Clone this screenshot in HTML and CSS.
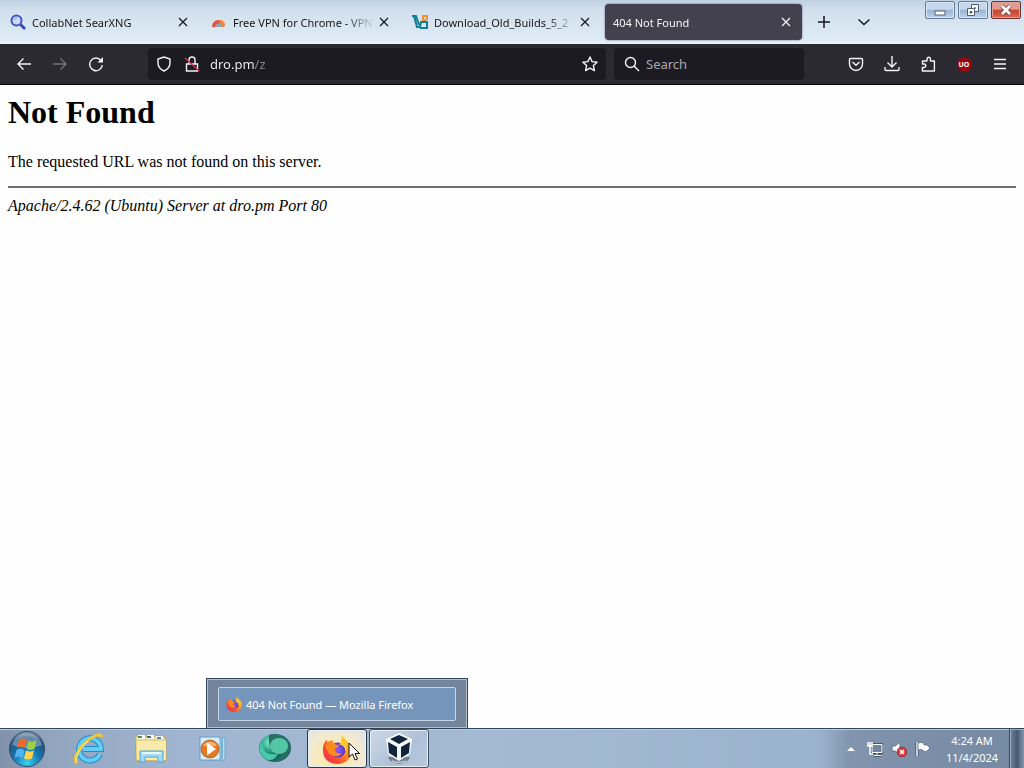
FILE: index.html
```html
<!DOCTYPE html>
<html lang="en">
<head>
<meta charset="utf-8">
<title>404 Not Found</title>
<link rel="stylesheet" href="styles.css">
</head>
<body>
<svg class="defs" aria-hidden="true">
  <defs>
    <linearGradient id="foxBody" x1="1" y1="0" x2="0" y2="1"><stop offset="0" stop-color="#fff04a"/><stop offset=".35" stop-color="#ffa51f"/><stop offset=".7" stop-color="#fb4a32"/><stop offset="1" stop-color="#e6236a"/></linearGradient>
    <radialGradient id="foxCore"><stop offset="0" stop-color="#9059ff"/><stop offset="1" stop-color="#5737c8"/></radialGradient>
    <symbol id="firefox" viewBox="0 0 32 32">
      <path fill="url(#foxBody)" d="M21 0c1 4 5 6 7 9 1 1 1 1 1 0 6 11 1 22-12 23C7 32 1 26 1 17c0-6 2-9 4-11l1 3c2-2 4-2 6-2l-1 5 7 1c3 0 3-9 3-13z"/>
      <circle cx="17" cy="17" r="8" fill="url(#foxCore)"/>
      <path fill="#ff8b20" d="M4 12c3-4 7-4 10-1l4 1c0 2-3 3-4 4 0 3 2 5 7 5-6 6-16 2-17-9z"/>
      <path fill="#ffca28" d="M21 5c5 3 7 9 4 14 0-5-3-7-7-8 2-1 3-3 3-6z"/>
    </symbol>
    <symbol id="cross" viewBox="0 0 10 10"><path d="M1 1l8 8M9 1L1 9" fill="none" stroke="currentColor" stroke-width="1.200"/></symbol>
  </defs>
</svg>

<header class="tabbar">
  <div class="tabs">
    <div class="tab">
      <svg class="favicon" viewBox="0 0 16 16"><circle cx="6.500" cy="6.500" r="5" fill="#cfdcff" stroke="#3d55c9" stroke-width="2"/><path d="M10.500 10.500L15 15" stroke="#3346b5" stroke-width="2.800"/><path d="M4 6a3 3 0 0 1 3-2" fill="none" stroke="#7b90ed"/></svg>
      <span class="tab-title">CollabNet SearXNG</span>
      <button class="tab-close" aria-label="Close tab"><svg><use href="#cross"/></svg></button>
    </div>
    <div class="tab">
      <svg class="favicon" viewBox="0 0 16 16"><path d="M1 13a6.500 6.500 0 0 1 13-1l-3 1a4 4 0 0 0-7 0z" fill="#e44d3c"/><path d="M9 6c3 0 5 2 5 6l-3 1c0-2-1-3-3-4z" fill="#f08a3c"/><path d="M4 13a3.500 3.500 0 0 1 7 0z" fill="#93a1b5"/></svg>
      <span class="tab-title">Free VPN for Chrome - VPN</span>
      <button class="tab-close" aria-label="Close tab"><svg><use href="#cross"/></svg></button>
    </div>
    <div class="tab">
      <svg class="favicon" viewBox="0 0 16 16"><path d="M0 2h4l3 9M2 2l3 11h3l1-5h6v6H8" fill="none" stroke="#167d92" stroke-width="2"/><path d="M15 6V2h-4v4h3" fill="none" stroke="#f29132" stroke-width="2"/></svg>
      <span class="tab-title">Download_Old_Builds_5_2</span>
      <button class="tab-close" aria-label="Close tab"><svg><use href="#cross"/></svg></button>
    </div>
    <div class="tab tab-active">
      <span class="tab-title">404 Not Found</span>
      <button class="tab-close" aria-label="Close tab"><svg><use href="#cross"/></svg></button>
    </div>
  </div>
  <button class="tab-tool" aria-label="New tab"><svg viewBox="0 0 14 14"><path d="M7 1v12M1 7h12"/></svg></button>
  <button class="tab-tool" aria-label="List all tabs"><svg viewBox="0 0 14 14"><path d="M1.500 4.500L7 9.500l5.500-5"/></svg></button>
  <div class="window-controls">
    <button class="win" aria-label="Minimize"><svg viewBox="0 0 16 14"><rect x="3" y="8" width="10" height="4" fill="#fff" stroke="#535d70"/></svg></button>
    <button class="win" aria-label="Restore"><svg viewBox="0 0 16 14"><path d="M6.500 1.500h7v7h-7z" fill="#f5f9ff" stroke="#535d70"/><path d="M9 4h2v2H9z" fill="#8597b2"/><path d="M2.500 5.500h7v7h-7z" fill="#fff" stroke="#535d70"/><path d="M5 8.500h2v1.500H5z" fill="#8597b2" stroke="#535d70"/></svg></button>
    <button class="win win-close" aria-label="Close"><svg viewBox="0 0 16 14"><path d="M4 3l8 8M12 3l-8 8" stroke="#71433f" stroke-width="4.500"/><path d="M4 3l8 8M12 3l-8 8" stroke="#fff" stroke-width="2.800"/></svg></button>
  </div>
</header>

<nav class="toolbar">
  <div class="nav-buttons">
    <button class="tool" aria-label="Back"><svg viewBox="0 0 16 16"><path d="M15 8H2M7.500 2.500L2 8l5.500 5.500"/></svg></button>
    <button class="tool" aria-label="Forward" disabled><svg viewBox="0 0 16 16"><path d="M1 8h13M8.500 2.500L14 8l-5.500 5.500"/></svg></button>
    <button class="tool" aria-label="Reload"><svg viewBox="0 0 16 16"><path d="M13 4.500A6.300 6.300 0 1 0 14.300 9"/><path class="solid" d="M15 1v5.500H9.500z"/></svg></button>
  </div>
  <div class="field url-field">
    <button class="tool" aria-label="Tracking protection"><svg viewBox="0 0 16 16"><path d="M8 1l6 2v4c0 4-2.500 6.500-6 8-3.500-1.500-6-4-6-8V3z"/></svg></button>
    <button class="tool" aria-label="Connection not secure"><svg viewBox="0 0 16 16"><path d="M2.500 8h11v7h-11zM5 8V4a3 3 0 0 1 6 0v4"/><path class="slash" d="M1 2l14 13"/></svg></button>
    <input class="url-input" type="text" aria-label="Address" value="dro.pm/z">
    <button class="tool" aria-label="Bookmark this page"><svg viewBox="0 0 16 16"><path stroke-linejoin="round" d="M8 1l2.100 4.600 5 .6-3.700 3.400 1 5L8 12.100l-4.400 2.500 1-5L.9 6.200l5-.6z"/></svg></button>
  </div>
  <div class="field search-field">
    <label class="search-label" for="search"><svg viewBox="0 0 16 16"><circle cx="6.500" cy="6.500" r="5"/><path d="M10 10l5 5"/></svg></label>
    <input id="search" type="text" placeholder="Search" aria-label="Search">
  </div>
  <div class="actions">
    <button class="tool" aria-label="Save to Pocket"><svg viewBox="0 0 16 16"><path d="M2.500 2.500h11q1 0 1 1V8A6.500 6.500 0 0 1 1.500 8V3.500q0-1 1-1zM4.500 6L8 9.300 11.500 6"/></svg></button>
    <button class="tool" aria-label="Downloads"><svg viewBox="0 0 16 16"><path d="M8 0v11M3.500 6.500L8 11l4.500-4.500M1 11v2.500q0 1 1 1h12q1 0 1-1V11"/></svg></button>
    <button class="tool" aria-label="Extensions"><svg viewBox="0 0 16 16"><path stroke-linejoin="round" d="M2.500 8V5H7V3a1.700 1.700 0 0 1 3.400 0v2h4v10h-12v-3.500h2a1.800 1.800 0 0 0 0-3.500z"/></svg></button>
    <button class="tool" aria-label="uBlock Origin"><span class="shield">UO</span></button>
    <button class="tool" aria-label="Menu"><svg viewBox="0 0 16 16"><path d="M2 3.500h12M2 8h12M2 12.500h12"/></svg></button>
  </div>
</nav>

<main class="page">
  <h1>Not Found</h1>
  <p>The requested URL was not found on this server.</p>
  <hr>
  <address>Apache/2.4.62 (Ubuntu) Server at dro.pm Port 80</address>
</main>

<footer class="taskbar">
  <button class="start" aria-label="Start">
    <svg viewBox="0 0 38 38">
      <defs><radialGradient id="orb" cx=".5" cy=".9" r=".9"><stop offset="0" stop-color="#35d3f5"/><stop offset=".45" stop-color="#1673ad"/><stop offset=".8" stop-color="#24547c"/><stop offset="1" stop-color="#8ca8be"/></radialGradient></defs>
      <circle cx="19" cy="19" r="17.500" fill="url(#orb)" stroke="#344b63"/>
      <path d="M4 15a15.500 15.500 0 0 1 30 0Q19 21 4 15z" fill="#fff" opacity=".3"/>
      <path d="M11 10q4-3 8 0l-2 8q-4-3-8 0z" fill="#f1672c"/><path d="M20.500 11q4 2 8-1l-2 9q-4 2-8 0z" fill="#9bcf45"/><path d="M8.500 20q4-3 8 0l-2 8q-4-3-8 0z" fill="#51b4ee"/><path d="M18 20.500q4 2 8 0l-2 8q-4 2-8 0z" fill="#ffd34c"/>
    </svg>
  </button>
  <div class="apps">
    <button class="app" aria-label="Internet Explorer"><svg viewBox="0 0 32 32"><path d="M27 21A11 11 0 1 1 28 16H10" fill="none" stroke="#2689ca" stroke-width="6"/><path d="M27 21A11 11 0 1 1 28 16H10" fill="none" stroke="#62cdf5" stroke-width="4"/><path d="M4 30C-1 28 5 16 13 9S28 0 29 4" fill="none" stroke="#eec73b" stroke-width="3"/><path d="M4 29C1 26 7 15 15 8" fill="none" stroke="#fff08c"/></svg></button>
    <button class="app" aria-label="Windows Explorer"><svg viewBox="0 0 32 32"><path d="M0 3h29l2 3v22H1z" fill="#e9d58a" stroke="#b8a15c"/><path d="M2 8h29v19H2z" fill="#f8eaa8"/><path d="M3 2h7v4H3zM12 2h7v4h-7zM21 3h7v3h-7z" fill="#fff"/><path d="M3 3h4v2H3z" fill="#4d983d"/><path d="M12 3h4v2h-4z" fill="#49677c"/><path d="M22 4h4v2h-4z" fill="#408cca"/><path d="M5 29V18h23v11h-5v-5H10v5z" fill="#a5daf2" stroke="#53a6d1"/><path d="M7 20h19" stroke="#e4f8ff" stroke-width="2"/></svg></button>
    <button class="app" aria-label="Windows Media Player"><svg viewBox="0 0 32 32"><path d="M8 5h20v22H8z" fill="#b8dff5" stroke="#6fa6cc"/><path d="M3 4h20v23H3z" fill="#d8effa" stroke="#5d9fca"/><path d="M25 6v20" stroke="#3986bf"/><circle cx="13" cy="16" r="9" fill="#e57923" stroke="#b96531"/><path d="M6 13a8 8 0 0 1 14 0z" fill="#f6b375"/><path d="M10 9.500L19 16l-9 6.500z" fill="#fff"/></svg></button>
    <button class="app" aria-label="Web browser">
      <svg viewBox="0 0 32 32"><defs><radialGradient id="sphere" cx=".35" cy=".3"><stop offset="0" stop-color="#8cf0d0"/><stop offset=".6" stop-color="#2ba187"/><stop offset="1" stop-color="#19695f"/></radialGradient></defs><ellipse cx="16" cy="15" rx="16" ry="14" fill="url(#sphere)"/><path d="M10 2c11-4 22 5 21 14-1 7-9 13-17 12 6-2 8-4 9-7-9 2-14-4-13-19z" fill="#286e63"/><ellipse cx="20" cy="13" rx="9" ry="8" fill="#52c6a5"/><path d="M3 9c1 12 7 13 16 12-3 6-9 8-14 4C0 20-1 14 3 9z" fill="#45c9a8"/></svg>
    </button>
    <div class="app-slot">
      <button class="app app-hot" aria-label="Mozilla Firefox"><svg><use href="#firefox"/></svg></button>
      <div class="preview">
        <button class="preview-item"><svg><use href="#firefox"/></svg><span>404 Not Found — Mozilla Firefox</span></button>
      </div>
      <svg class="cursor" viewBox="0 0 12 19"><path d="M1 1v14l3.500-3 2.500 6 2.500-1L7 11.500h4.500z" fill="#fff" stroke="#111"/></svg>
    </div>
    <button class="app app-open" aria-label="VirtualBox"><svg viewBox="0 0 32 32"><path d="M5 24q2 6 11 7 9-1 11-7z" fill="#71808e"/><path d="M9 28q7 3 14 0" fill="none" stroke="#b9c6d1" stroke-width="1.500"/><path d="M16 0l13 6-2 15-11 7-11-7L3 6z" fill="#f6f9fc"/><path d="M16 2l9 4-9 5-9-5zM5 9l9 5v11l-8-5zM27 9l-9 5v11l8-5z" fill="#10243c"/></svg></button>
  </div>
  <div class="tray">
    <button class="tray-icon" aria-label="Show hidden icons"><svg viewBox="0 0 16 16"><path d="M4 10l4-4 4 4z" fill="#fff"/></svg></button>
    <button class="tray-icon" aria-label="Network"><svg viewBox="0 0 16 16"><path d="M5 3.500h10v8H5zM10 12v3M7 14.500h7" fill="#687e98" stroke="#354357" stroke-width="2.500"/><path d="M5 3.500h10v8H5zM10 12v2M7 14.500h7" fill="#71879f" stroke="#fff"/><path d="M1 1v4h4V1M3 1v12h3" fill="none" stroke="#fff" stroke-width="1.500"/></svg></button>
    <button class="tray-icon" aria-label="Volume muted"><svg viewBox="0 0 16 16"><path d="M1 5h3l5-4v13l-5-4H1z" fill="#f4f7fa" stroke="#637386"/><circle cx="11" cy="11" r="4.800" fill="#d93837" stroke="#9d3038"/><path d="M9 9l4 4M13 9l-4 4" stroke="#fff" stroke-width="1.700"/></svg></button>
    <button class="tray-icon" aria-label="Action Center"><svg viewBox="0 0 16 16"><path d="M2 1v14" stroke="#34465b" stroke-width="3"/><path d="M2 1v14" stroke="#fff" stroke-width="1.500"/><path d="M3 2q3-1 6 0v2h3l3 3-3 3q-2 1-4 0V9q-3-1-5 0z" fill="#fff" stroke="#526278" stroke-width=".7"/></svg></button>
    <button class="clock"><span>4:24 AM</span><span>11/4/2024</span></button>
    <button class="show-desktop" aria-label="Show desktop"></button>
  </div>
</footer>
</body>
</html>
```

FILE: styles.css
```css
* { box-sizing: border-box; }

body {
  display: flex;
  flex-direction: column;
  min-height: 100vh;
  margin: 0;
  background: #fefefe;
  font-family: "Noto Sans", "Open Sans", sans-serif;
  font-size: 12px;
}

button, input {
  margin: 0;
  padding: 0;
  border: 0;
  background: none;
  color: inherit;
  font: inherit;
}

.defs { position: absolute; width: 0; height: 0; }

.tabbar {
  display: flex;
  align-items: center;
  height: 44px;
  background: linear-gradient(#c0d2e5, #d3e0ed 25%, #dcebf5 90%, #edf2fb);
  color: #15171c;
}

.tabs { display: flex; flex: 0 1 804px; min-width: 0; }

.tab {
  display: flex;
  flex: 1 1 0;
  align-items: center;
  min-width: 0;
  height: 36px;
  margin: 0 2px;
  padding: 0 7px 0 8px;
  border-radius: 4px;
  font-size: 11px;
}

.tab-active {
  background: #42414d;
  color: #f4f4f8;
  box-shadow: 0 0 2px #55596a;
}

.favicon { flex: none; width: 16px; height: 16px; margin-right: 6px; }

.tab-title {
  flex: 1;
  overflow: hidden;
  white-space: nowrap;
  mask-image: linear-gradient(to left, transparent, #000 30px);
}

.tab-close {
  display: grid;
  flex: none;
  place-items: center;
  width: 18px;
  height: 20px;
}

.tab-close svg { width: 10px; height: 10px; }

.tab-tool { display: grid; flex: none; place-items: center; width: 40px; height: 36px; }

.tab-tool svg {
  width: 14px;
  height: 14px;
  fill: none;
  stroke: currentColor;
  stroke-width: 1.5;
}

.window-controls {
  display: flex;
  align-self: flex-start;
  gap: 3px;
  margin-left: auto;
  padding: 1px 3px 0 0;
}

.win {
  display: grid;
  place-items: center;
  width: 30px;
  height: 18px;
  border: 1px solid #657b99;
  border-radius: 2px;
  background: linear-gradient(#c7d8ed 45%, #9db5d2 50%, #b9d2ed);
  box-shadow: inset 0 0 0 1px #d7e5f5;
}

.win svg { width: 16px; height: 14px; }

.win-close {
  border-color: #692f32;
  background: linear-gradient(#e29b90 45%, #c64432 50%, #d7674f);
  box-shadow: inset 0 0 0 1px #e4a297;
}

.toolbar {
  display: flex;
  align-items: center;
  height: 41px;
  border-bottom: 1px solid #08080b;
  background: #2b2a33;
  color: #f4f4f8;
}

.nav-buttons { display: flex; flex: none; width: 148px; padding-left: 6px; }

.tool { display: grid; flex: none; place-items: center; width: 36px; height: 32px; }

.tool:disabled { color: #72717a; }

.tool svg, .search-label svg {
  width: 16px;
  height: 16px;
  fill: none;
  stroke: currentColor;
  stroke-width: 1.4;
}

.tool .solid { fill: currentColor; stroke: none; }
.tool .slash { stroke: #d92b58; }

.field {
  display: flex;
  align-items: center;
  height: 32px;
  border-radius: 4px;
  background: #1c1b22;
  font-size: 13px;
}

.url-field { flex: 7 7 458px; min-width: 0; margin-right: 8px; padding-left: 2px; }
.url-field .tool { width: 28px; }
.url-field .tool:last-child { width: 32px; }

.url-input {
  flex: 1;
  min-width: 0;
  height: 32px;
  margin-left: 4px;
  background: linear-gradient(to right, #f4f4f8 44px, #8b8a94 44px);
  background-clip: text;
  color: transparent;
}

.search-field { flex: 3 3 190px; min-width: 0; padding-left: 10px; gap: 6px; }
.search-label { display: grid; }
.search-field input { flex: 1; min-width: 0; height: 32px; }
.search-field input::placeholder { color: #a9a8b0; opacity: 1; }

.actions { display: flex; flex: none; justify-content: flex-end; width: 220px; padding-right: 6px; }

.shield {
  display: grid;
  place-items: center;
  width: 15px;
  height: 15px;
  border-radius: 50%;
  background: #970711;
  color: #fff;
  font-size: 7px;
  font-weight: bold;
}

.page {
  flex: 1;
  padding: 8px;
  color: #000;
  font-family: "Liberation Serif", serif;
  font-size: 16px;
}

.page h1 { margin: 0 0 21px; font-size: 32px; line-height: 38px; }
.page p { margin: 0 0 14px; line-height: 20px; }
.page hr { height: 2px; margin: 0 0 8px; border: 0; background: #707070; }
.page address { line-height: 20px; }

.taskbar {
  display: flex;
  height: 40px;
  border-top: 1px solid #33485e;
  background: linear-gradient(to right, #8091aa, #92a5bf 50px, #9fb5d1 180px, #a4bad4 480px, #9bb2ce 820px, #8094ae 850px, #7689a3);
  box-shadow: inset 0 1px #bccbdd;
}

.start { display: grid; flex: none; place-items: center; width: 54px; margin-right: 5px; }
.start svg { width: 38px; height: 38px; }

.apps { display: flex; gap: 2px; }
.app-slot { position: relative; display: flex; }
.app { display: grid; place-items: center; width: 60px; height: 39px; }
.app svg { width: 32px; height: 32px; }

.app-hot, .app-open {
  border: 1px solid #26384d;
  border-radius: 3px;
  box-shadow: inset 0 0 0 1px #e8eef5;
}

.app-hot { background: radial-gradient(circle at 45% 80%, #ffe99d, #f3ead0 60%, #dce1e6); }
.app-open { border-color: #3d5068; background: linear-gradient(135deg, #ced9e7, #afc1d7 60%, #b8c9dd); }
.app-hot svg { width: 30px; height: 30px; }

.cursor { position: absolute; top: 13px; left: 41px; width: 12px; height: 19px; }

.preview {
  position: absolute;
  bottom: 100%;
  left: 50%;
  padding: 8px 11px 7px;
  border: 1px solid #30445a;
  background: #74849b;
  box-shadow: inset 0 0 0 1px #b3c0d0;
  transform: translateX(-50%);
}

.preview-item {
  display: flex;
  align-items: center;
  width: 238px;
  height: 34px;
  padding: 0 7px;
  gap: 4px;
  border: 1px solid #c3d5e8;
  border-radius: 2px;
  background: #7595ba;
  color: #fff;
  font-size: 11px;
  white-space: nowrap;
}

.preview-item svg { flex: none; width: 16px; height: 16px; }

.tray { display: flex; align-items: center; margin-left: auto; color: #fff; }
.tray-icon { display: grid; place-items: center; width: 24px; height: 32px; }
.tray-icon svg { width: 16px; height: 16px; }

.clock {
  display: flex;
  flex-direction: column;
  align-items: center;
  width: 74px;
  font-size: 11px;
  line-height: 17px;
}

.show-desktop {
  align-self: stretch;
  width: 15px;
  border-left: 1px solid #35485e;
  background: linear-gradient(to right, #71849b, #465b73 50%, #8496ab);
  box-shadow: inset 1px 1px #a0afc0;
}
```
